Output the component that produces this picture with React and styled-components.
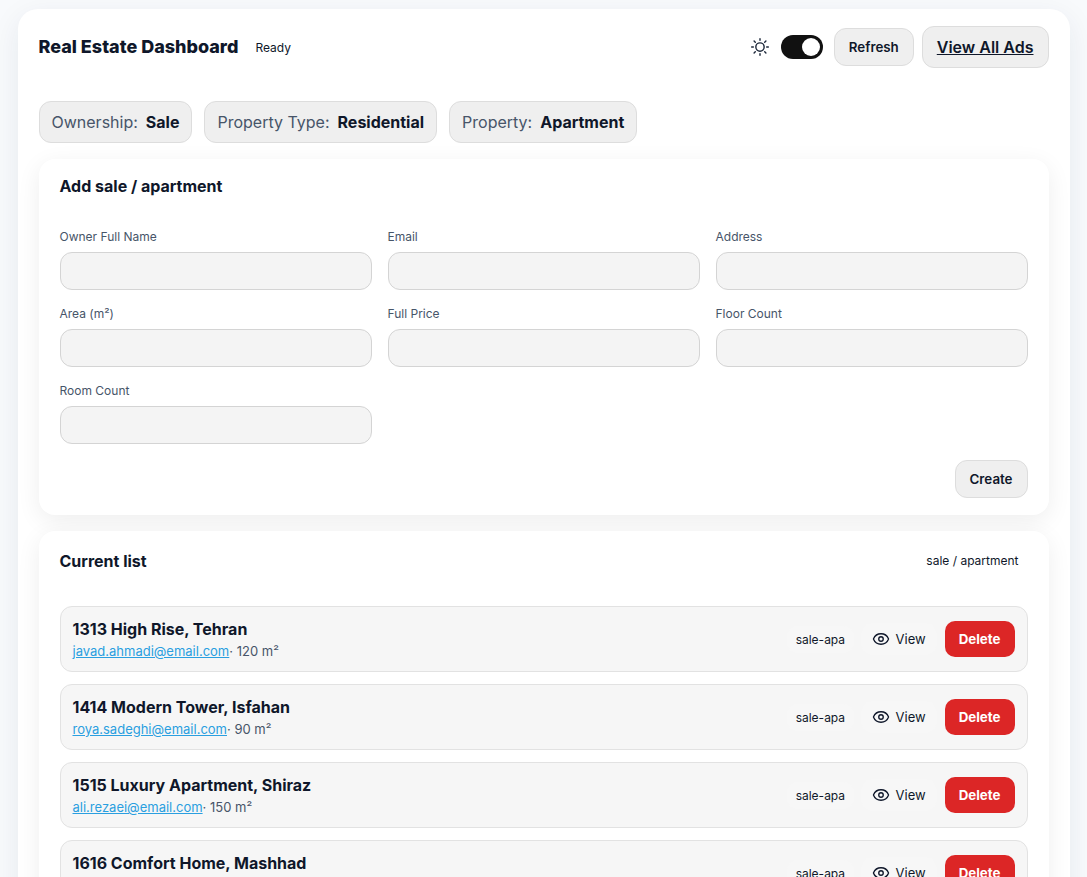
import React from "react";
import styled, { createGlobalStyle } from "styled-components";
import { Eye } from "lucide-react";

const Global = createGlobalStyle`
  html, body { margin: 0; padding: 0; height: 877px; overflow: hidden; background: #f8fafc; }
  body { font-family: Inter, "Liberation Sans", sans-serif; color: #0f172a; }
  * { box-sizing: border-box; }
`;
const Page = styled.div`padding: 9px 17.5px 0;`;
const Shell = styled.main`
  background: #fff; border-radius: 20px; padding: 17px 21px 24px;
  box-shadow: 0 8px 30px rgba(15,40,80,.08);
`;
const Header = styled.header`display: flex; align-items: center; justify-content: space-between; height: 42px; margin-bottom: 33px;`;
const TitleGroup = styled.div`display: flex; align-items: center; gap: 17px;`;
const Title = styled.h1`margin: 0; font-size: 18px; font-weight: 800; line-height: 24px; color: #0f172a;`;
const Status = styled.span`font-size: 12px; color: #0f172a;`;
const Actions = styled.div`display: flex; align-items: center;`;
const SunWrap = styled.span`display: flex; color: #1e293b; margin-right: 11px;`;
const Toggle = styled.span`
  position: relative; width: 42px; height: 24px; border-radius: 12px; background: #111; margin-right: 11px;
  &::after { content: ""; position: absolute; right: 3px; top: 3px; width: 18px; height: 18px; border-radius: 50%; background: #fff; }
`;
const Button = styled.button`
  font-family: inherit; font-weight: 600; font-size: 13.33px; color: #0f172a; height: 38px; padding: 0 14px;
  border: 1px solid #ddd; border-radius: 12px; background: #efefef;
`;
const LinkButton = styled.a`
  display: flex; align-items: center; height: 42px; padding: 0 14px; margin-left: 8px; font-size: 16px; font-weight: 600;
  color: #0f172a; text-decoration: underline; border: 1px solid #ddd; border-radius: 12px; background: #efefef;
`;
const Filters = styled.div`display: flex; gap: 12px; margin-bottom: 16px;`;
const Chip = styled.div`
  display: flex; align-items: center; gap: 8px; height: 42px; padding: 0 12px; font-size: 16px; color: #475569;
  border: 1px solid #ddd; border-radius: 12px; background: #efefef;
  strong { font-weight: 700; color: #0f172a; }
`;
const Card = styled.section`
  background: #fff; border-radius: 16px; padding: 16px 21px 17px; margin-bottom: 16px;
  box-shadow: 0 6px 24px rgba(0,0,0,.07);
`;
const CardTitle = styled.h2`margin: 0; font-size: 16px; font-weight: 700; line-height: 22px; color: #0f172a;`;
const Form = styled.div`display: grid; grid-template-columns: repeat(3, 1fr); column-gap: 16px; row-gap: 16px; margin-top: 32px;`;
const Field = styled.label`display: flex; flex-direction: column; gap: 8px; font-size: 12px; line-height: 15px; color: #475569;`;
const Input = styled.input`height: 38px; border: 1px solid #d4d4d4; border-radius: 12px; background: #f4f4f4;`;
const FormFoot = styled.div`display: flex; justify-content: flex-end; margin-top: 16px;`;
const ListHead = styled.div`display: flex; align-items: center; justify-content: space-between; height: 28px; margin-bottom: 31px;`;
const Tag = styled.span`font-size: 12px; padding: 0 9px; color: #0f172a;`;
const HeadTag = styled(Tag)`margin-bottom: 2px;`;
const List = styled.div`display: flex; flex-direction: column; gap: 12px;`;
const Row = styled.article`
  display: flex; align-items: center; justify-content: space-between; height: 66px; padding: 0 12px;
  border: 1px solid #e2e2e2; border-radius: 12px; background: #f6f6f6;
`;
const RowTitle = styled.div`font-size: 16px; font-weight: 700; line-height: 22px; margin-bottom: 2px; color: #0f172a;`;
const Meta = styled.div`font-size: 13px; line-height: 18px; color: #475569; a { color: #2a9fe0; }`;
const RowActions = styled.div`display: flex; align-items: center;`;
const RowTag = styled(Tag)`margin-right: 6.5px; padding-top: 6px; padding-bottom: 6px; border-radius: 10px; background: #f7f7f7;`;
const ViewLink = styled.span`
  display: flex; align-items: center; gap: 6px; font-size: 13px; color: #0f172a; margin-right: 8px; padding: 6px 10px;
  border: 1px solid #f7f7f7; border-radius: 10px; background: #f7f7f7;
`;
const Delete = styled.button`
  font-family: inherit; font-size: 13.33px; font-weight: 700; color: #fff; height: 36px; padding: 0 14px; border: 0; border-radius: 10px; background: #dc2626;
`;

const fields = ["Owner Full Name", "Email", "Address", "Area (m²)", "Full Price", "Floor Count", "Room Count"];
const rows = [
  ["1313 High Rise, Tehran", "javad.ahmadi@email.com", "120"],
  ["1414 Modern Tower, Isfahan", "roya.sadeghi@email.com", "90"],
  ["1515 Luxury Apartment, Shiraz", "ali.rezaei@email.com", "150"],
  ["1616 Comfort Home, Mashhad", "sara.karimi@email.com", "110"],
];

const SunIcon = () => (
  <svg width="20" height="20" viewBox="0 0 24 24" fill="none" stroke="currentColor" strokeWidth="1.7" strokeLinecap="round">
    <circle cx="12" cy="12" r="5" />
    <path d="M12 2v2M12 20v2M4.93 4.93l1.41 1.41M17.66 17.66l1.41 1.41M2 12h2M20 12h2M4.93 19.07l1.41-1.41M17.66 6.34l1.41-1.41" />
  </svg>
);

export default function App() {
  return (
    <Page>
      <Global />
      <Shell>
        <Header>
          <TitleGroup><Title>Real Estate Dashboard</Title><Status>Ready</Status></TitleGroup>
          <Actions>
            <SunWrap><SunIcon /></SunWrap>
            <Toggle />
            <Button>Refresh</Button>
            <LinkButton href="#">View All Ads</LinkButton>
          </Actions>
        </Header>
        <Filters>
          <Chip>Ownership: <strong>Sale</strong></Chip>
          <Chip>Property Type: <strong>Residential</strong></Chip>
          <Chip>Property: <strong>Apartment</strong></Chip>
        </Filters>
        <Card>
          <CardTitle>Add sale / apartment</CardTitle>
          <Form>
            {fields.map((f) => <Field key={f}>{f}<Input /></Field>)}
          </Form>
          <FormFoot><Button>Create</Button></FormFoot>
        </Card>
        <Card>
          <ListHead><CardTitle>Current list</CardTitle><HeadTag>sale / apartment</HeadTag></ListHead>
          <List>
            {rows.map(([t, e, a]) => (
              <Row key={t}>
                <div>
                  <RowTitle>{t}</RowTitle>
                  <Meta><a href="#">{e}</a>· {a} m²</Meta>
                </div>
                <RowActions>
                  <RowTag>sale-apa</RowTag>
                  <ViewLink><Eye size={18} strokeWidth={1.8} />View</ViewLink>
                  <Delete>Delete</Delete>
                </RowActions>
              </Row>
            ))}
          </List>
        </Card>
      </Shell>
    </Page>
  );
}
